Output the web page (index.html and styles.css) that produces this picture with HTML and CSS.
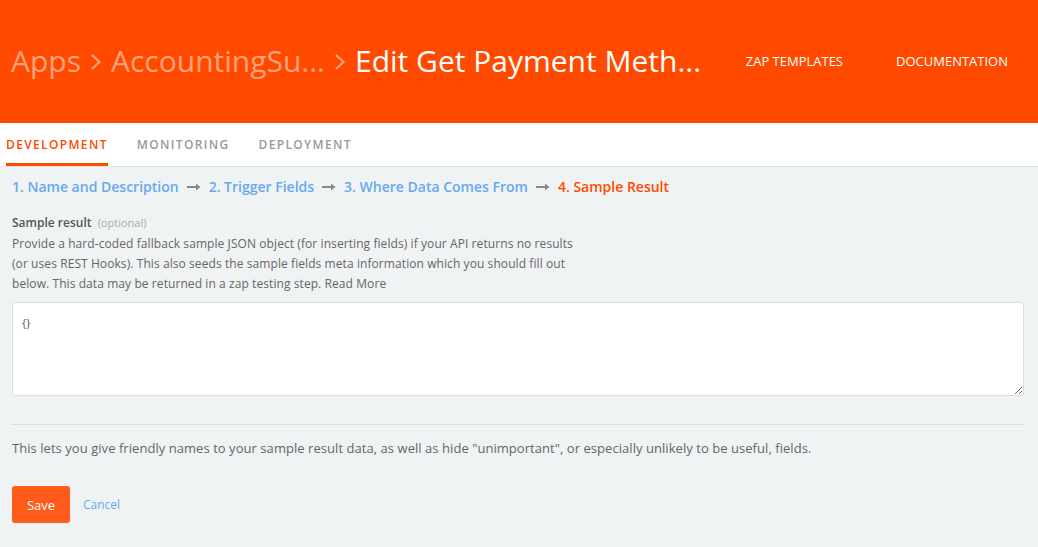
FILE: index.html
```html
<!DOCTYPE html>
<html>
<head>
<meta charset="utf-8">
<link rel="stylesheet" href="styles.css">
</head>
<body>
<header class="topbar">
  <nav class="crumbs">
    <span class="crumb faded">Apps</span>
    <svg class="chev" width="12" height="18" viewBox="0 0 12 18"><path d="M2 2 L9.5 9 L2 16" fill="none" stroke="currentColor" stroke-width="2.2"/></svg>
    <span class="crumb faded">AccountingSu...</span>
    <svg class="chev" width="12" height="18" viewBox="0 0 12 18"><path d="M2 2 L9.5 9 L2 16" fill="none" stroke="currentColor" stroke-width="2.2"/></svg>
    <span class="crumb current">Edit Get Payment Meth...</span>
  </nav>
  <div class="toplinks">
    <a class="toplink">ZAP TEMPLATES</a>
    <a class="toplink">DOCUMENTATION</a>
  </div>
</header>
<div class="tabs">
  <a class="tab active">DEVELOPMENT</a>
  <a class="tab">MONITORING</a>
  <a class="tab">DEPLOYMENT</a>
</div>
<main class="content">
  <div class="steps">
    <a class="step">1. Name and Description</a>
    <svg class="arrow" width="14" height="8" viewBox="0 0 14 8"><path d="M0 4 H10" stroke="currentColor" stroke-width="2"/><path d="M9 0.5 L13.5 4 L9 7.5 Z" fill="currentColor"/></svg>
    <a class="step">2. Trigger Fields</a>
    <svg class="arrow" width="14" height="8" viewBox="0 0 14 8"><path d="M0 4 H10" stroke="currentColor" stroke-width="2"/><path d="M9 0.5 L13.5 4 L9 7.5 Z" fill="currentColor"/></svg>
    <a class="step">3. Where Data Comes From</a>
    <svg class="arrow" width="14" height="8" viewBox="0 0 14 8"><path d="M0 4 H10" stroke="currentColor" stroke-width="2"/><path d="M9 0.5 L13.5 4 L9 7.5 Z" fill="currentColor"/></svg>
    <span class="step current">4. Sample Result</span>
  </div>
  <div class="field">
    <label class="label">Sample result <span class="optional">(optional)</span></label>
    <p class="help">Provide a hard-coded fallback sample JSON object (for inserting fields) if your API returns no results (or uses REST Hooks). This also seeds the sample fields meta information which you should fill out below. This data may be returned in a zap testing step. Read More</p>
    <textarea class="code">{}</textarea>
  </div>
  <hr class="sep">
  <p class="note">This lets you give friendly names to your sample result data, as well as hide "unimportant", or especially unlikely to be useful, fields.</p>
  <div class="actions">
    <button class="save">Save</button>
    <a class="cancel">Cancel</a>
  </div>
</main>
</body>
</html>
```
FILE: styles.css
```css
* { box-sizing: border-box; }
html, body { margin: 0; padding: 0; }
body {
  font-family: "Open Sans", "Liberation Sans", sans-serif;
  background: #f0f3f4;
  color: #666;
}
.topbar {
  height: 123px;
  background: #ff4a00;
  display: flex;
  align-items: center;
  justify-content: space-between;
  padding: 0 30px 0 11px;
}
.crumbs {
  display: flex;
  align-items: center;
  gap: 9px;
  font-size: 30px;
  line-height: 1;
  padding-bottom: 1px;
}
.crumb.faded { color: #ffa27d; }
.crumb.current { color: #fff; }
.chev { color: #ffa27d; margin-top: 2px; }
.toplinks {
  display: flex;
  gap: 53px;
  padding-bottom: 2px;
}
.toplink {
  color: #fff;
  font-size: 13px;
  text-decoration: none;
}
.tabs {
  background: #fff;
  height: 44px;
  border-bottom: 1px solid #e2e6e8;
  display: flex;
  gap: 29px;
  padding-left: 6px;
}
.tab {
  font-size: 12px;
  font-weight: 600;
  letter-spacing: 1.35px;
  color: #999;
  padding-top: 13px;
  height: 43px;
}
.tab.active {
  color: #ff4a00;
  border-bottom: 3px solid #ff4a00;
}
.content {
  padding: 8px 14px 0 12px;
}
.steps {
  display: flex;
  align-items: center;
  gap: 8px;
  font-size: 14px;
  font-weight: 600;
  height: 23px;
}
.step { color: #68a8f2; }
.step.current { color: #ff4a00; }
.arrow { color: #888; margin-top: 1px; }
.field { margin-top: 15px; }
.label {
  display: block;
  font-size: 12px;
  font-weight: 600;
  color: #555;
  line-height: 20px;
}
.optional {
  font-size: 11px;
  font-weight: 400;
  color: #aaa;
  margin-left: 3px;
}
.help {
  margin: 1px 0 0;
  font-size: 12px;
  line-height: 20px;
  color: #666;
  max-width: 575px;
  letter-spacing: 0.08px;
}
.code {
  display: block;
  width: 100%;
  height: 94px;
  margin-top: 8px;
  border: 1px solid #d9dee1;
  border-radius: 3px;
  background: #fff;
  padding: 12px 9px;
  font-family: "Open Sans", sans-serif;
  font-size: 11px;
  color: #555;
}
.sep {
  border: 0;
  border-top: 1px solid #dcdfe1;
  margin: 28px 0 0;
}
.note {
  font-size: 13px;
  line-height: 20px;
  margin: 13px 0 0;
  color: #666;
  letter-spacing: 0.05px;
}
.actions {
  display: flex;
  align-items: center;
  gap: 13px;
  margin-top: 28px;
}
.save {
  width: 58px;
  height: 37px;
  border: 0;
  border-radius: 3px;
  background: #ff5b1a;
  color: #fff;
  font-family: inherit;
  font-size: 13px;
}
.cancel {
  color: #68a8f2;
  font-size: 12px;
}
```
